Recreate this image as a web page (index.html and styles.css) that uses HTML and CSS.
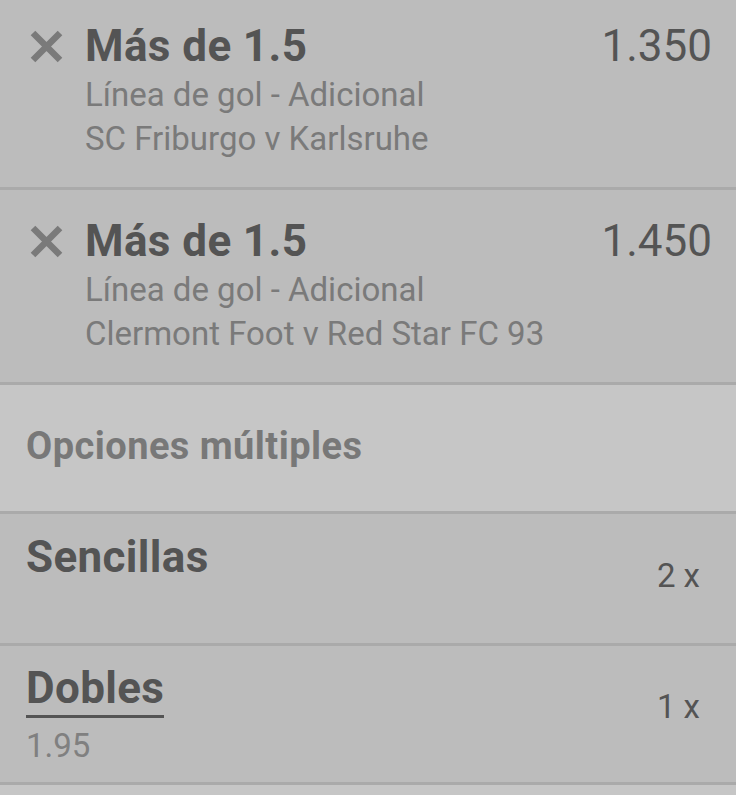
FILE: index.html
```html
<!DOCTYPE html>
<html lang="es">
<head>
<meta charset="utf-8">
<title>Boleto</title>
<link rel="stylesheet" href="styles.css">
</head>
<body>
<div class="slip">
  <div class="bet">
    <svg class="remove" width="33" height="33" viewBox="0 0 33 33"><path d="M3 3L30 30M30 3L3 30" stroke="#7a7a7a" stroke-width="6.5" fill="none"/></svg>
    <div class="bet-info">
      <div class="bet-head">
        <span class="bet-title">Más de 1.5</span>
        <span class="bet-odds">1.350</span>
      </div>
      <div class="bet-sub first">Línea de gol - Adicional</div>
      <div class="bet-sub">SC Friburgo v Karlsruhe</div>
    </div>
  </div>
  <div class="bet">
    <svg class="remove" width="33" height="33" viewBox="0 0 33 33"><path d="M3 3L30 30M30 3L3 30" stroke="#7a7a7a" stroke-width="6.5" fill="none"/></svg>
    <div class="bet-info">
      <div class="bet-head">
        <span class="bet-title">Más de 1.5</span>
        <span class="bet-odds">1.450</span>
      </div>
      <div class="bet-sub first">Línea de gol - Adicional</div>
      <div class="bet-sub">Clermont Foot v Red Star FC 93</div>
    </div>
  </div>
  <div class="section-head">Opciones múltiples</div>
  <div class="multi singles">
    <div class="multi-left">
      <div class="multi-title">Sencillas</div>
    </div>
    <div class="multi-count">2 x</div>
  </div>
  <div class="multi doubles">
    <div class="multi-left">
      <div class="multi-title underlined">Dobles</div>
      <div class="multi-odds">1.95</div>
    </div>
    <div class="multi-count">1 x</div>
  </div>
  <div class="rest"></div>
</div>
</body>
</html>
```

FILE: styles.css
```css
html, body {
  margin: 0;
  padding: 0;
  background: #c6c6c6;
  font-family: Roboto, "Liberation Sans", sans-serif;
}
.slip {
  width: 736px;
  margin-top: -5px;
  display: flex;
  flex-direction: column;
}
.bet {
  display: flex;
  align-items: flex-start;
  gap: 22px;
  padding: 29px 24px 26px 30px;
  background: #bcbcbc;
  border-bottom: 3px solid #aaaaaa;
}
.remove {
  flex: none;
  margin-top: 6px;
}
.bet-info {
  flex: 1;
  display: flex;
  flex-direction: column;
}
.bet-head {
  display: flex;
  justify-content: space-between;
  font-size: 44px;
  line-height: 44px;
  color: #545454;
}
.bet-title {
  font-weight: 700;
  letter-spacing: 0.4px;
}
.bet-odds {
  font-weight: 400;
}
.bet-sub {
  font-size: 33px;
  line-height: 44px;
  color: #7a7a7a;
}
.bet-sub.first {
  margin-top: 5px;
}
.section-head {
  background: #c6c6c6;
  padding: 42px 26px 46px;
  font-size: 38px;
  line-height: 38px;
  font-weight: 700;
  letter-spacing: 0.45px;
  color: #787878;
  border-bottom: 3px solid #aaaaaa;
}
.multi {
  display: flex;
  justify-content: space-between;
  align-items: flex-start;
  background: #bcbcbc;
  padding: 0 36px 0 26px;
  border-bottom: 3px solid #aaaaaa;
}
.singles {
  height: 132px;
  padding-top: 21px;
  box-sizing: border-box;
}
.doubles {
  padding-top: 20px;
  padding-bottom: 14px;
}
.multi-left {
  display: flex;
  flex-direction: column;
  align-items: flex-start;
}
.multi-title {
  font-size: 44px;
  line-height: 44px;
  font-weight: 700;
  letter-spacing: 0.35px;
  color: #545454;
}
.multi-title.underlined {
  padding-bottom: 5px;
  border-bottom: 3px solid #545454;
}
.multi-odds {
  margin-top: 6px;
  font-size: 33px;
  line-height: 44px;
  color: #808080;
}
.multi-count {
  margin-top: 19px;
  font-size: 33px;
  line-height: 44px;
  color: #545454;
}
.rest {
  height: 20px;
  background: #c6c6c6;
}
```
